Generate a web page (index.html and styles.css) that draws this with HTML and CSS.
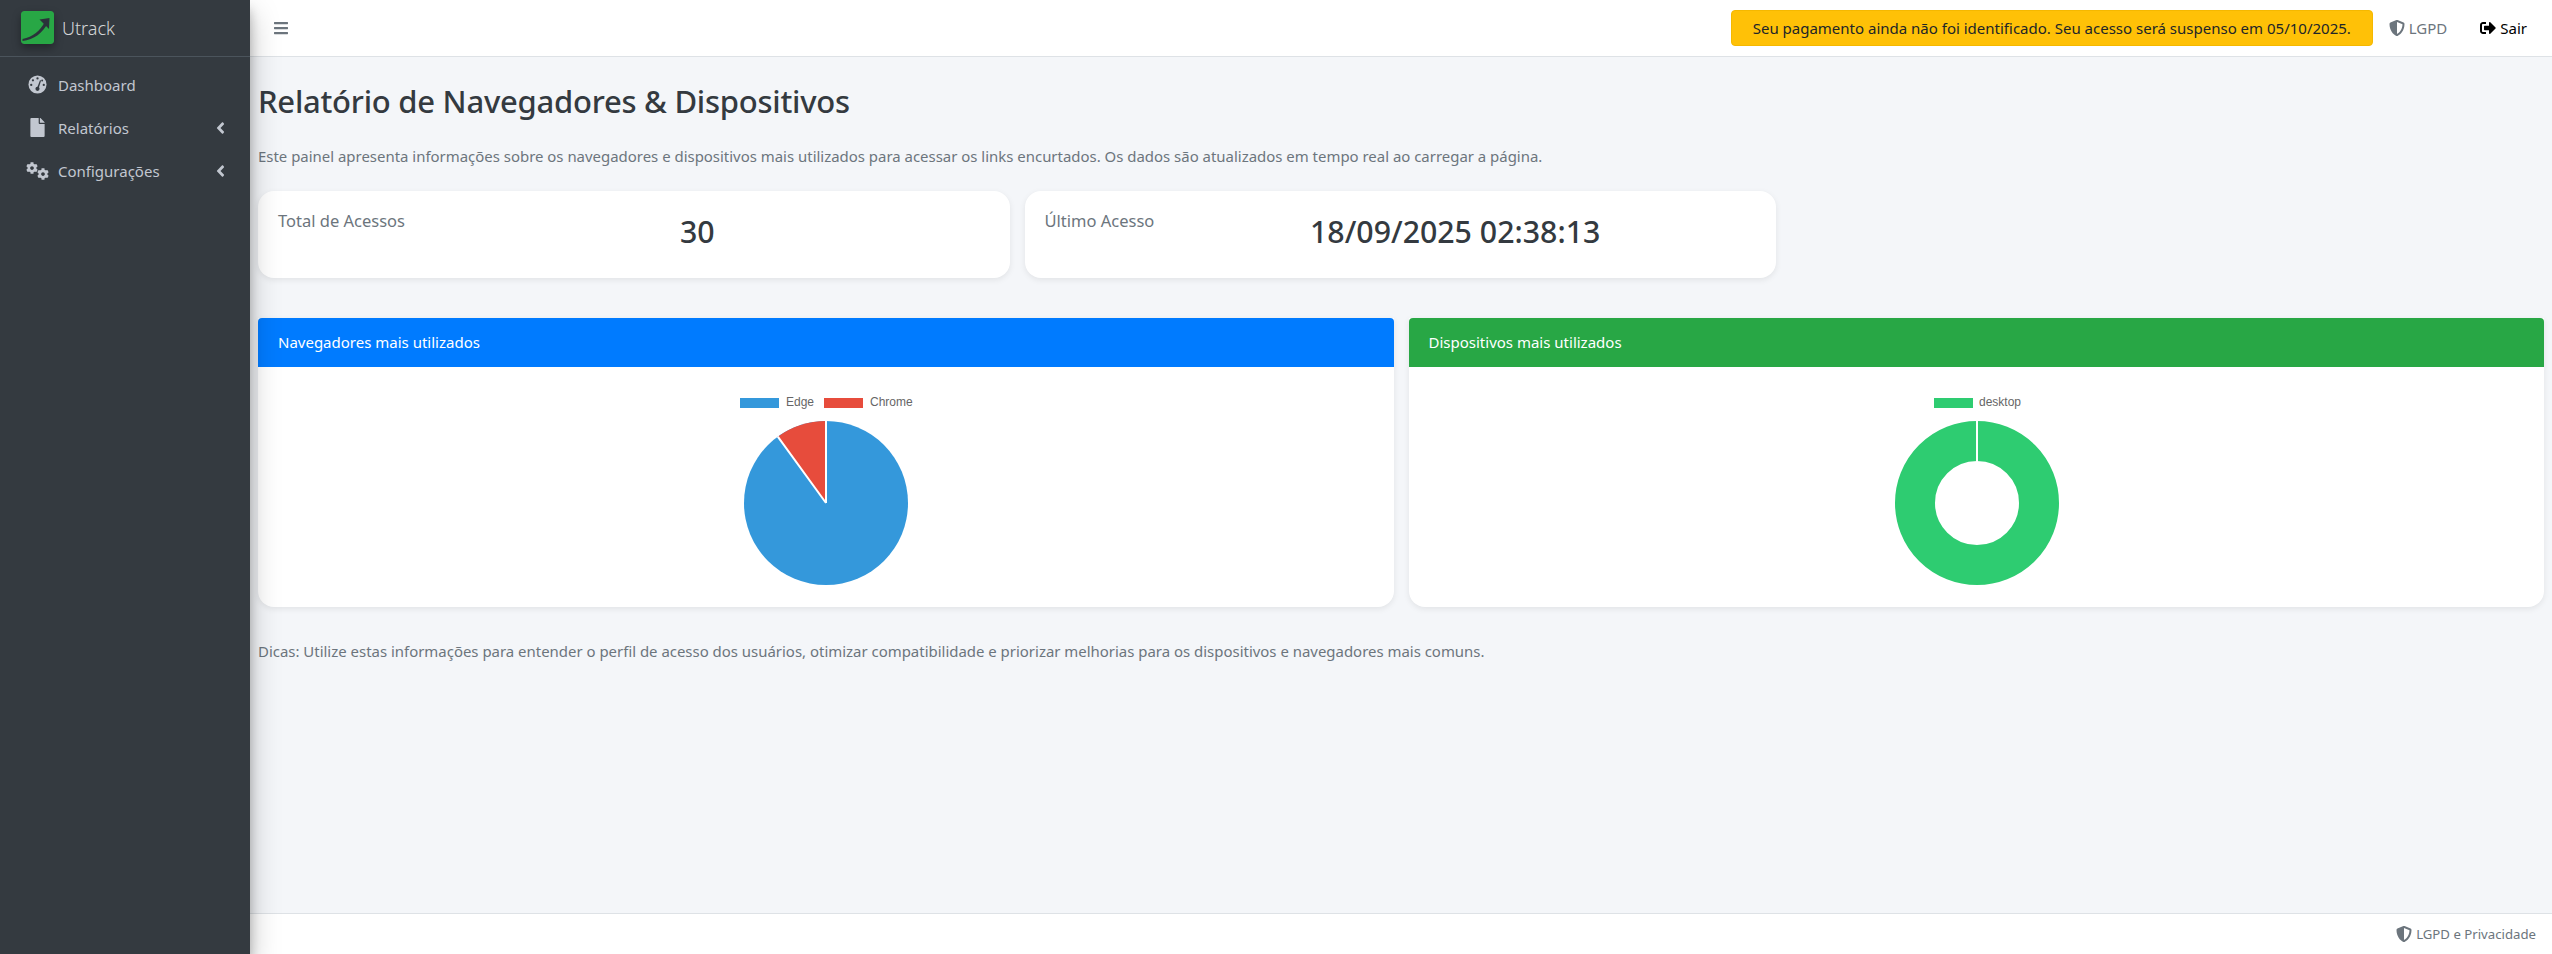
FILE: index.html
```html
<!DOCTYPE html>
<html lang="pt-BR">
<head>
<meta charset="UTF-8" />
<title>Utrack</title>
<link rel="stylesheet" href="styles.css">
</head>
<body>

<svg class="icon-defs" width="0" height="0">
  <symbol id="i-cog" viewBox="0 0 512 512"><path d="M487.4 315.7l-42.6-24.6c4.3-23.2 4.3-47 0-70.2l42.6-24.6c4.9-2.8 7.1-8.6 5.5-14-11.1-35.6-30-67.8-54.7-94.6-3.8-4.1-10-5.1-14.8-2.3L380.8 110c-17.9-15.4-38.5-27.3-60.8-35.1V25.8c0-5.6-3.9-10.5-9.4-11.7-36.7-8.2-74.3-7.8-109.2 0-5.5 1.2-9.4 6.1-9.4 11.7V75c-22.2 7.9-42.8 19.8-60.8 35.1L88.7 85.5c-4.9-2.8-11-1.9-14.8 2.3-24.7 26.7-43.6 58.9-54.7 94.6-1.7 5.4.6 11.2 5.5 14L67.3 221c-4.3 23.2-4.3 47 0 70.2l-42.6 24.6c-4.9 2.8-7.1 8.6-5.5 14 11.1 35.6 30 67.8 54.7 94.6 3.8 4.1 10 5.1 14.8 2.3l42.6-24.6c17.9 15.4 38.5 27.3 60.8 35.1v49.2c0 5.6 3.9 10.5 9.4 11.7 36.7 8.2 74.3 7.8 109.2 0 5.5-1.2 9.4-6.1 9.4-11.7v-49.2c22.2-7.9 42.8-19.8 60.8-35.1l42.6 24.6c4.9 2.8 11 1.9 14.8-2.3 24.7-26.7 43.6-58.9 54.7-94.6 1.5-5.5-.7-11.3-5.6-14.1zM256 336c-44.1 0-80-35.9-80-80s35.9-80 80-80 80 35.9 80 80-35.9 80-80 80z"/></symbol>
  <symbol id="i-angle" viewBox="0 0 256 512"><path d="M31.7 239l136-136c9.4-9.4 24.6-9.4 33.9 0l22.6 22.6c9.4 9.4 9.4 24.6 0 33.9L127.9 256l96.4 96.4c9.4 9.4 9.4 24.6 0 33.9L201.7 409c-9.4 9.4-24.6 9.4-33.9 0l-136-136c-9.5-9.4-9.5-24.6-.1-34z"/></symbol>
  <symbol id="i-shield" viewBox="0 0 512 512"><path d="M466.5 83.7l-192-80a48.15 48.15 0 0 0-36.9 0l-192 80C27.7 91.1 16 108.6 16 128c0 198.5 114.5 335.7 221.5 380.3 11.8 4.9 25.1 4.9 36.9 0C360.1 472.6 496 349.3 496 128c0-19.4-11.7-36.9-29.5-44.3zM256.1 446.3l-.1-381 175.9 73.3c-3.3 151.4-82.1 261.1-175.8 307.7z"/></symbol>
</svg>

<aside class="sidebar">
  <div class="brand">
    <svg class="brand-logo" viewBox="0 0 33 33">
      <rect width="33" height="33" rx="3" fill="#28a745"/>
      <path d="M1.500 30C13 28.500 22 22 27 11.500L24 10.500C19 20 12 26 1.500 28Z" fill="#2a323a"/>
      <path d="M18.500 8.500L28.500 7L28 18Z" fill="#2a323a"/>
    </svg>
    <span class="brand-text">Utrack</span>
  </div>
  <nav class="side-nav">
    <a class="side-link">
      <svg class="side-icon" viewBox="0 0 20 20">
        <circle cx="10" cy="10" r="9.500"/>
        <g class="gauge-marks">
          <circle cx="10" cy="3.600" r="1.200"/>
          <circle cx="5.200" cy="5.600" r="1.200"/>
          <circle cx="3.400" cy="10.400" r="1.200"/>
          <circle cx="16.600" cy="10.400" r="1.200"/>
          <circle cx="14.900" cy="5.800" r="1"/>
          <circle cx="10" cy="14.600" r="2.200"/>
          <path d="M9.200 14.400L12.600 5.400L13.800 5.800L11 14.800Z"/>
        </g>
      </svg>
      <span>Dashboard</span>
    </a>
    <a class="side-link">
      <svg class="side-icon" viewBox="0 0 384 512"><path d="M224 136V0H24C10.7 0 0 10.700 0 24v464c0 13.300 10.700 24 24 24h336c13.300 0 24-10.700 24-24V160H248c-13.200 0-24-10.800-24-24zm160-14.100v6.100H256V0h6.100c6.400 0 12.500 2.500 17 7l97.900 98c4.500 4.500 7 10.600 7 16.900z"/></svg>
      <span>Relatórios</span>
      <svg class="side-angle"><use href="#i-angle"/></svg>
    </a>
    <a class="side-link">
      <span class="gears">
        <svg class="gear gear-a"><use href="#i-cog"/></svg>
        <svg class="gear gear-b"><use href="#i-cog"/></svg>
      </span>
      <span>Configurações</span>
      <svg class="side-angle"><use href="#i-angle"/></svg>
    </a>
  </nav>
</aside>

<div class="wrapper">
  <header class="topbar">
    <svg class="menu-icon" viewBox="0 0 448 512"><path d="M16 132h416c8.800 0 16-7.200 16-16V76c0-8.800-7.200-16-16-16H16C7.200 60 0 67.200 0 76v40c0 8.800 7.200 16 16 16zm0 160h416c8.800 0 16-7.200 16-16v-40c0-8.800-7.200-16-16-16H16c-8.800 0-16 7.200-16 16v40c0 8.800 7.200 16 16 16zm0 160h416c8.800 0 16-7.200 16-16v-40c0-8.800-7.200-16-16-16H16c-8.800 0-16 7.200-16 16v40c0 8.800 7.200 16 16 16z"/></svg>
    <div class="pay-alert">Seu pagamento ainda não foi identificado. Seu acesso será suspenso em 05/10/2025.</div>
    <a class="top-link lgpd"><svg class="top-icon"><use href="#i-shield"/></svg>LGPD</a>
    <a class="top-link sair">
      <svg class="top-icon" viewBox="0 0 512 512"><path d="M497 273L329 441c-15 15-41 4.500-41-17v-96H152c-13.300 0-24-10.700-24-24v-96c0-13.300 10.700-24 24-24h136V88c0-21.400 25.900-32 41-17l168 168c9.300 9.400 9.300 24.600 0 34zM192 436v-40c0-6.600-5.400-12-12-12H96c-17.700 0-32-14.300-32-32V160c0-17.700 14.300-32 32-32h84c6.600 0 12-5.400 12-12V76c0-6.600-5.400-12-12-12H96c-53 0-96 43-96 96v192c0 53 43 96 96 96h84c6.600 0 12-5.400 12-12z"/></svg>Sair
    </a>
  </header>

  <main class="content">
    <h2 class="page-title">Relatório de Navegadores &amp; Dispositivos</h2>
    <p class="muted intro">Este painel apresenta informações sobre os navegadores e dispositivos mais utilizados para acessar os links encurtados. Os dados são atualizados em tempo real ao carregar a página.</p>

    <div class="stats">
      <div class="stat-card">
        <span class="stat-label">Total de Acessos</span>
        <span class="stat-value">30</span>
      </div>
      <div class="stat-card">
        <span class="stat-label">Último Acesso</span>
        <span class="stat-value">18/09/2025 02:38:13</span>
      </div>
    </div>

    <div class="charts">
      <section class="chart-card">
        <div class="chart-head head-blue">Navegadores mais utilizados</div>
        <div class="chart-body">
          <svg class="chart" width="400" height="220" viewBox="0 0 400 220">
            <rect x="30" y="11" width="39" height="10" fill="#3498db"/>
            <text x="76" y="19">Edge</text>
            <rect x="114" y="11" width="39" height="10" fill="#e74c3c"/>
            <text x="160" y="19">Chrome</text>
            <circle cx="116" cy="116" r="82" fill="#3498db"/>
            <path d="M116 116L67.800 49.700A82 82 0 0 1 116 34Z" fill="#e74c3c"/>
            <path d="M116 116V34M116 116L67.800 49.700" stroke="#fff" stroke-width="2" fill="none"/>
          </svg>
        </div>
      </section>
      <section class="chart-card">
        <div class="chart-head head-green">Dispositivos mais utilizados</div>
        <div class="chart-body">
          <svg class="chart" width="400" height="220" viewBox="0 0 400 220">
            <rect x="73" y="11" width="39" height="10" fill="#2ecc71"/>
            <text x="118" y="19">desktop</text>
            <circle cx="116" cy="116" r="62" fill="none" stroke="#2ecc71" stroke-width="40"/>
            <path d="M116 34V75" stroke="#fff" stroke-width="2"/>
          </svg>
        </div>
      </section>
    </div>

    <p class="muted tips">Dicas: Utilize estas informações para entender o perfil de acesso dos usuários, otimizar compatibilidade e priorizar melhorias para os dispositivos e navegadores mais comuns.</p>
  </main>

  <footer class="footer">
    <svg class="top-icon"><use href="#i-shield"/></svg>LGPD e Privacidade
  </footer>
</div>

</body>
</html>
```

FILE: styles.css
```css
* {
  box-sizing: border-box;
}
html, body {
  height: 100%;
}
body {
  margin: 0;
  display: flex;
  font-family: "Noto Sans", Arial, sans-serif;
  font-size: 15px;
  line-height: 24px;
  color: #212529;
  background: #f4f6f9;
  overflow: hidden;
}
.icon-defs {
  position: absolute;
}

/* sidebar */
.sidebar {
  width: 250px;
  flex: none;
  background: #343a40;
  color: #c2c7d0;
  position: relative;
  z-index: 2;
  box-shadow: 0 14px 28px rgba(0,0,0,0.25), 0 10px 10px rgba(0,0,0,0.22);
}
.brand {
  height: 57px;
  display: flex;
  align-items: center;
  gap: 8px;
  padding: 0 0 0 21px;
  border-bottom: 1px solid #4b545c;
}
.brand-logo {
  width: 33px;
  height: 33px;
  margin-bottom: 1px;
  box-shadow: 0 4px 8px rgba(0,0,0,0.35);
  border-radius: 3px;
}
.brand-text {
  font-size: 18px;
  font-weight: 300;
  color: rgba(255,255,255,0.8);
}
.side-nav {
  padding-top: 6px;
}
.side-link {
  height: 43px;
  display: flex;
  align-items: center;
  padding: 0 24px 0 28px;
}
.side-icon {
  width: 19px;
  height: 19px;
  fill: #c2c7d0;
  margin-right: 11px;
  flex: none;
}
.gauge-marks {
  fill: #343a40;
}
.gears {
  width: 24px;
  height: 20px;
  margin: 0 8px 0 -2px;
  position: relative;
  flex: none;
}
.gear {
  position: absolute;
  fill: #c2c7d0;
  width: 12px;
  height: 12px;
}
.gear-a {
  left: 0;
  top: 1px;
}
.gear-b {
  left: 11px;
  top: 7px;
}
.side-angle {
  width: 11px;
  height: 18px;
  fill: #c2c7d0;
  margin-left: auto;
}

/* top bar */
.wrapper {
  flex: 1;
  min-width: 0;
  display: flex;
  flex-direction: column;
}
.topbar {
  height: 57px;
  flex: none;
  display: flex;
  align-items: center;
  background: #fff;
  border-bottom: 1px solid #dee2e6;
  padding: 0 25px 0 24px;
}
.menu-icon {
  width: 14px;
  height: 16px;
  fill: #6c757d;
}
.pay-alert {
  margin-left: auto;
  height: 36px;
  width: 642px;
  display: flex;
  align-items: center;
  justify-content: center;
  background: #ffc107;
  border: 1px solid #f5b800;
  border-radius: 4px;
  color: #212529;
}
.top-link {
  display: flex;
  align-items: center;
}
.top-icon {
  width: 16px;
  height: 16px;
  margin-right: 4px;
  fill: currentColor;
}
.lgpd {
  color: #6c757d;
  margin-left: 16px;
}
.sair {
  color: #000;
  margin-left: 33px;
}

/* content */
.content {
  flex: 1;
  padding: 0 8px;
}
.page-title {
  margin: 24px 0 0;
  font-size: 31px;
  line-height: 40px;
  letter-spacing: -0.25px;
  font-weight: 500;
  color: #343a40;
}
.muted {
  color: #6c757d;
  margin: 0;
  font-size: 14.950px;
}
.intro {
  margin-top: 23px;
}
.stats {
  display: flex;
  gap: 15px;
  margin-top: 23px;
  width: 1518px;
}
.stat-card {
  flex: 1;
  height: 87px;
  display: flex;
  align-items: flex-start;
  padding: 17px 20px;
  background: #fff;
  border-radius: 16px;
  box-shadow: 0 2px 6px rgba(0,0,0,0.08);
}
.stat-label {
  font-size: 16.500px;
  margin-top: 1px;
  color: #6c757d;
}
.stat-value {
  flex: 1;
  text-align: center;
  font-size: 30.300px;
  line-height: 48px;
  font-weight: 500;
  color: #343a40;
}

/* charts */
.charts {
  display: flex;
  gap: 15px;
  margin-top: 40px;
}
.chart-card {
  flex: 1;
  background: #fff;
  border-radius: 0 0 16px 16px;
  box-shadow: 0 2px 6px rgba(0,0,0,0.08);
}
.chart-head {
  height: 49px;
  display: flex;
  align-items: center;
  padding: 0 20px 2px;
  color: #fff;
  border-radius: 4px 4px 0 0;
}
.head-blue {
  background: #007bff;
}
.head-green {
  background: #28a745;
}
.chart-body {
  height: 240px;
  padding: 20px 0 0 452px;
}
.chart {
  display: block;
  overflow: visible;
}
.chart text {
  font-family: "Liberation Sans", Arial, sans-serif;
  font-size: 12px;
  fill: #666;
}
.tips {
  margin-top: 32px;
}

/* footer */
.footer {
  height: 41px;
  flex: none;
  display: flex;
  align-items: center;
  justify-content: flex-end;
  padding: 0 16px;
  background: #fff;
  border-top: 1px solid #dee2e6;
  color: #6c757d;
  font-size: 13.200px;
}
```
